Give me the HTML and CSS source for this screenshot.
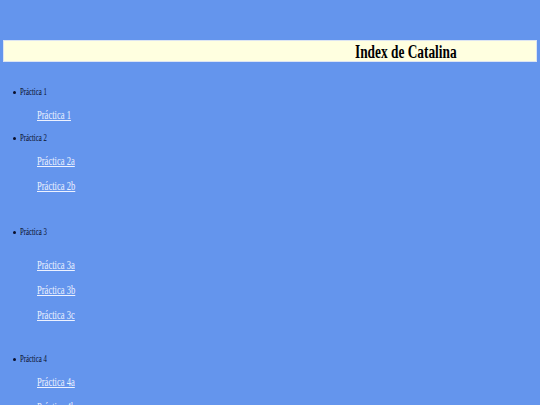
FILE: index.html
```html
<!DOCTYPE html>
<html lang="es">
<head>
<meta charset="utf-8">
<title>Index de Catalina</title>
<link rel="stylesheet" href="styles.css">
</head>
<body>
<div class="page">
  <div class="banner"><h1 class="title"><span class="cond">Index de Catalina</span></h1></div>
  <ul class="list">
    <li class="item"><span class="cond">Práctica 1</span></li>
    <li class="link-row"><a class="cond" href="#">Práctica 1</a></li>
    <li class="item"><span class="cond">Práctica 2</span></li>
    <li class="link-row"><a class="cond" href="#">Práctica 2a</a></li>
    <li class="link-row"><a class="cond" href="#">Práctica 2b</a></li>
    <li class="item item-spaced"><span class="cond">Práctica 3</span></li>
    <li class="link-row link-spaced"><a class="cond" href="#">Práctica 3a</a></li>
    <li class="link-row"><a class="cond" href="#">Práctica 3b</a></li>
    <li class="link-row"><a class="cond" href="#">Práctica 3c</a></li>
    <li class="item item-spaced2"><span class="cond">Práctica 4</span></li>
    <li class="link-row"><a class="cond" href="#">Práctica 4a</a></li>
    <li class="link-row"><a class="cond" href="#">Práctica 4b</a></li>
  </ul>
</div>
</body>
</html>
```
FILE: styles.css
```css
html, body {
  margin: 0;
  padding: 0;
  background: #6495ed;
}
body {
  font-family: "Liberation Serif", "Times New Roman", serif;
}
.page {
  width: 540px;
  height: 405px;
  overflow: hidden;
  padding-top: 40px;
  box-sizing: border-box;
}
.cond {
  display: inline-block;
  transform: scaleX(0.675);
  transform-origin: 0 50%;
  white-space: nowrap;
}
.banner {
  margin: 0 0 0 3px;
  width: 532px;
  height: 20px;
  background: #ffffe0;
  border: 1px solid #dce4f2;
}
.title {
  margin: 0;
  padding-left: 351px;
  font-size: 19.8px;
  line-height: 20px;
  font-weight: bold;
  color: #000;
}
.list {
  list-style: none;
  margin: 24px 0 0 0;
  padding: 0;
  display: flex;
  flex-direction: column;
  gap: 9px;
}
.item {
  display: flex;
  align-items: center;
  gap: 4px;
  padding-left: 12.5px;
  font-size: 10px;
  line-height: 12px;
  color: #0a0f2a;
}
.item::before {
  content: "";
  flex: none;
  width: 3px;
  height: 3px;
  border-radius: 50%;
  background: #0a0f2a;
}
.item-spaced { margin-top: 23px; }
.item-spaced2 { margin-top: 21px; }
.link-spaced { margin-top: 10px; }
.link-row {
  padding-left: 37px;
  font-size: 12.7px;
  line-height: 16px;
}
.link-row a {
  color: #eef2ff;
  text-decoration: underline;
}
```
